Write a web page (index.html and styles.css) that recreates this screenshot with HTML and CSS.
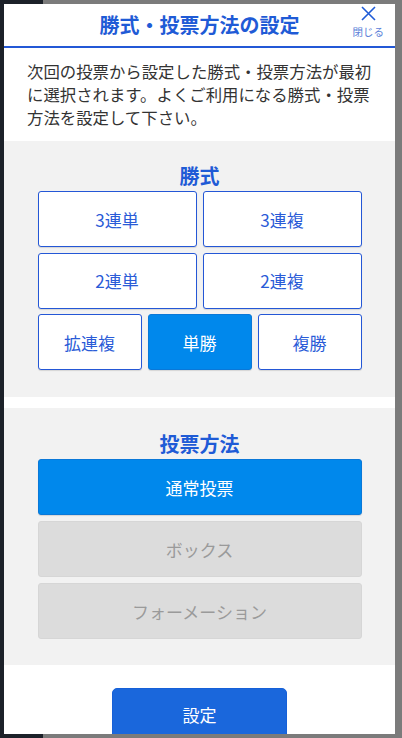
FILE: index.html
```html
<!DOCTYPE html>
<html lang="ja">
<head>
<meta charset="utf-8">
<title>勝式・投票方法の設定</title>
<link rel="stylesheet" href="styles.css">
</head>
<body>
<div class="modal">
  <header class="modal-header">
    <h1 class="modal-title">勝式・投票方法の設定</h1>
    <button class="close" type="button">
      <svg class="close-icon" width="15" height="15" viewBox="0 0 15 15"><path d="M1 1L14 14M14 1L1 14" stroke="#1f5bd6" stroke-width="1.6" fill="none"/></svg>
      <span class="close-label">閉じる</span>
    </button>
  </header>
  <p class="desc">次回の投票から設定した勝式・投票方法が最初に選択されます。よくご利用になる勝式・投票方法を設定して下さい。</p>
  <section class="panel panel-type">
    <h2 class="panel-title">勝式</h2>
    <div class="type-grid">
      <button class="opt span3" type="button">3連単</button>
      <button class="opt span3" type="button">3連複</button>
      <button class="opt span3" type="button">2連単</button>
      <button class="opt span3" type="button">2連複</button>
      <button class="opt span2" type="button">拡連複</button>
      <button class="opt span2 active" type="button">単勝</button>
      <button class="opt span2" type="button">複勝</button>
    </div>
  </section>
  <section class="panel panel-method">
    <h2 class="panel-title">投票方法</h2>
    <div class="method-list">
      <button class="opt active" type="button">通常投票</button>
      <button class="opt disabled" type="button">ボックス</button>
      <button class="opt disabled" type="button">フォーメーション</button>
    </div>
  </section>
  <footer class="modal-footer">
    <button class="submit" type="button">設定</button>
  </footer>
</div>
</body>
</html>
```
FILE: styles.css
```css
html, body {
  margin: 0;
  height: 100%;
}
body {
  background: linear-gradient(to right, #1c2129 0, #1c2129 43px, #7b7b7b 43px);
  padding: 4px 7px 4px 4px;
  box-sizing: border-box;
  font-family: "Noto Sans CJK JP", "Noto Sans", sans-serif;
}
.modal {
  width: 391px;
  height: 730px;
  background: #ffffff;
  overflow: hidden;
  display: flex;
  flex-direction: column;
}
.modal-header {
  position: relative;
  height: 42px;
  flex: none;
  border-bottom: 2px solid #2358d6;
}
.modal-title {
  margin: 0;
  text-align: center;
  font-size: 20px;
  line-height: 42px;
  font-weight: 700;
  color: #1f5bd6;
}
.close {
  position: absolute;
  right: 11px;
  top: 2px;
  display: flex;
  flex-direction: column;
  align-items: center;
  gap: 4px;
  padding: 0;
  border: 0;
  background: none;
  font-family: inherit;
}
.close-icon {
  display: block;
}
.close-label {
  font-size: 10.5px;
  line-height: 13px;
  color: #5a80d8;
}
.desc {
  margin: 0;
  padding: 12px 23px 12px;
  font-size: 16.4px;
  line-height: 23px;
  color: #333333;
  flex: none;
}
.panel {
  background: #f2f2f2;
  padding: 23px 33.5px 27px;
  flex: none;
}
.panel-method {
  margin-top: 11px;
  padding-top: 24px;
  padding-bottom: 26px;
}
.panel-title {
  margin: 0 0 3px;
  text-align: center;
  font-size: 20px;
  line-height: 24px;
  font-weight: 700;
  color: #1f5bd6;
}
.type-grid {
  display: grid;
  grid-template-columns: repeat(6, 1fr);
  grid-auto-rows: 56px;
  column-gap: 6px;
  row-gap: 5.5px;
}
.span3 { grid-column: span 3; }
.span2 { grid-column: span 2; }
.method-list {
  display: flex;
  flex-direction: column;
  gap: 6px;
}
.method-list .opt {
  height: 56px;
}
.opt {
  box-sizing: border-box;
  margin: 0;
  border: 1px solid #2457d6;
  border-radius: 3px;
  background: #ffffff;
  color: #2a5bd7;
  font-family: inherit;
  font-size: 17px;
  font-weight: 400;
  box-shadow: 0 1px 1px rgba(0, 0, 0, 0.12);
  padding: 0;
}
.opt.active {
  background: #0088ec;
  border-color: #0a78d8;
  color: #ffffff;
}
.opt.disabled {
  background: #dcdcdc;
  border-color: #d6d6d6;
  color: #9a9a9a;
  box-shadow: none;
}
.modal-footer {
  flex: 1;
  display: flex;
  justify-content: center;
  align-items: flex-start;
  padding-top: 22.5px;
}
.submit {
  width: 175px;
  height: 53px;
  flex: none;
  border: 1px solid #1660d8;
  border-radius: 5px;
  background: #1a67dc;
  color: #ffffff;
  font-family: inherit;
  font-size: 17px;
  padding: 0;
}
```
